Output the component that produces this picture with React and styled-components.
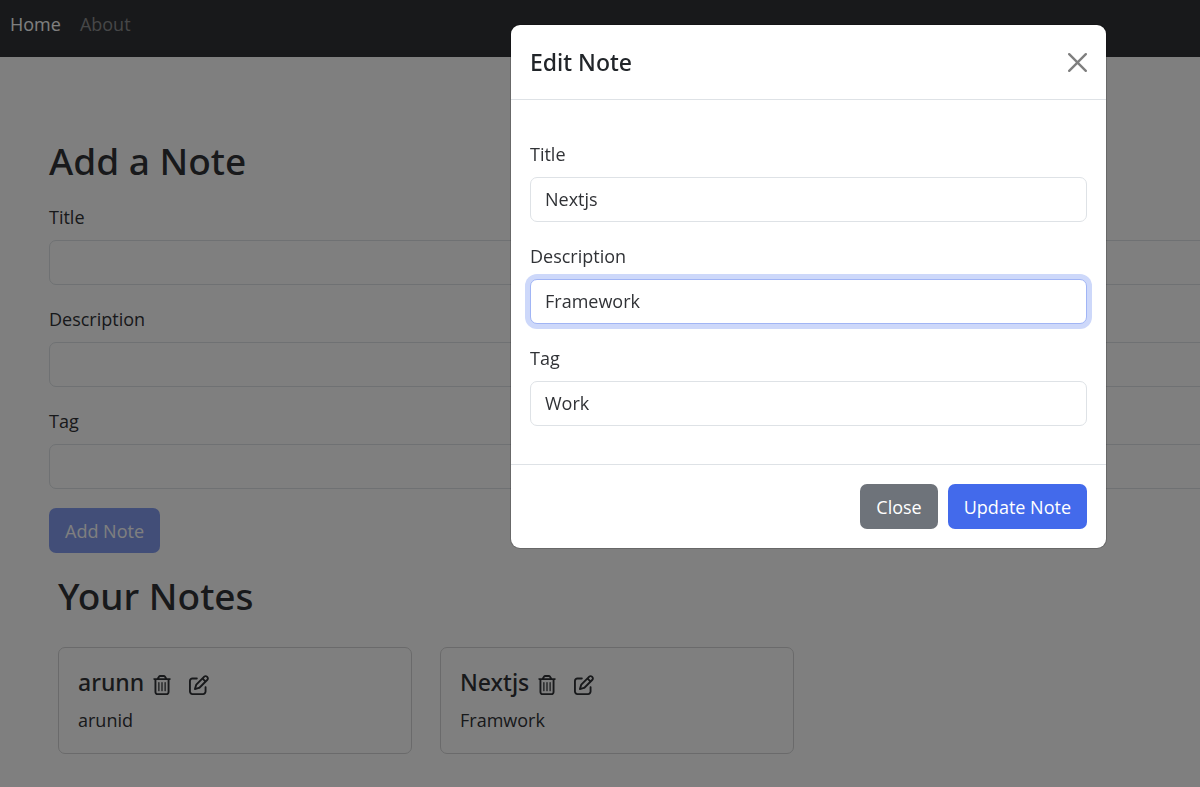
import React, { useState } from 'react'
import styled, { createGlobalStyle } from 'styled-components'
import { FaRegTrashCan, FaRegPenToSquare } from 'react-icons/fa6'

const fields = [
  { name: 'title', label: 'Title' },
  { name: 'description', label: 'Description' },
  { name: 'tag', label: 'Tag' },
]

const notes = [
  { id: 1, title: 'arunn', description: 'arunid' },
  { id: 2, title: 'Nextjs', description: 'Framwork' },
]

const Navbar = () => {
  return (
    <Nav>
      <NavItem href="#home" $active>Home</NavItem>
      <NavItem href="#about">About</NavItem>
    </Nav>
  )
}

const NoteFields = ({ prefix, values, onChange, focused }) => {
  return fields.map(({ name, label }) => (
    <Field key={name}>
      <Label htmlFor={prefix + name}>{label}</Label>
      <Input
        id={prefix + name}
        name={name}
        type="text"
        autoComplete="off"
        value={values[name]}
        onChange={onChange}
        $focused={focused === name}
      />
    </Field>
  ))
}

const NoteItem = ({ note }) => {
  return (
    <Card>
      <CardHead>
        <CardTitle>{note.title}</CardTitle>
        <IconButton type="button" aria-label="Delete note"><FaRegTrashCan /></IconButton>
        <IconButton type="button" aria-label="Edit note"><FaRegPenToSquare /></IconButton>
      </CardHead>
      <CardText>{note.description}</CardText>
    </Card>
  )
}

const EditModal = () => {
  const [note, setNote] = useState({ title: 'Nextjs', description: 'Framework', tag: 'Work' })
  const onChange = (e) => setNote({ ...note, [e.target.name]: e.target.value })

  return (
    <Backdrop>
      <Modal role="dialog" aria-modal="true" aria-labelledby="edit-heading">
        <ModalHeader>
          <ModalTitle id="edit-heading">Edit Note</ModalTitle>
          <CloseButton type="button" aria-label="Close">
            <svg viewBox="0 0 16 16" width="19" height="19" fill="currentColor">
              <path d="M.293.293a1 1 0 0 1 1.414 0L8 6.586 14.293.293a1 1 0 1 1 1.414 1.414L9.414 8l6.293 6.293a1 1 0 0 1-1.414 1.414L8 9.414l-6.293 6.293a1 1 0 0 1-1.414-1.414L6.586 8 .293 1.707a1 1 0 0 1 0-1.414" />
            </svg>
          </CloseButton>
        </ModalHeader>
        <ModalBody>
          <NoteFields prefix="edit-" values={note} onChange={onChange} focused="description" />
        </ModalBody>
        <ModalFooter>
          <Button type="button" $secondary>Close</Button>
          <Button type="button">Update Note</Button>
        </ModalFooter>
      </Modal>
    </Backdrop>
  )
}

const App = () => {
  const [note, setNote] = useState({ title: '', description: '', tag: '' })
  const onChange = (e) => setNote({ ...note, [e.target.name]: e.target.value })

  return (
    <>
      <GlobalStyle />
      <Page>
        <Navbar />
        <Main>
          <Heading>Add a Note</Heading>
          <form>
            <NoteFields prefix="add-" values={note} onChange={onChange} />
            <Button type="submit" disabled>Add Note</Button>
          </form>
          <Notes>
            <Heading>Your Notes</Heading>
            <NoteGrid>
              {notes.map((item) => <NoteItem key={item.id} note={item} />)}
            </NoteGrid>
          </Notes>
        </Main>
      </Page>
      <EditModal />
    </>
  )
}

const GlobalStyle = createGlobalStyle`
  * {
    box-sizing: border-box;
  }
  body {
    margin: 0;
    background: #fff;
    color: #303236;
    font-family: "Open Sans", "Noto Sans", sans-serif;
    font-size: 18px;
    line-height: 31px;
  }
  button, input {
    font: inherit;
  }
  h1, h2, h3, p {
    margin: 0;
  }
  h1, h2, h3 {
    font-family: "Noto Sans", "Open Sans", sans-serif;
    font-weight: 500;
  }
`

const Page = styled.div`
  min-height: 100vh;
  overflow: hidden;
`

const Nav = styled.nav`
  display: flex;
  gap: 19px;
  padding: 9px 10px 17px;
  background: #313336;
`

const NavItem = styled.a`
  color: ${({ $active }) => ($active ? '#fff' : '#8d8e90')};
  text-decoration: none;
`

/* the form runs on past the right edge of the window */
const Main = styled.main`
  margin-right: -19px;
  padding: 81px 0 34px 49px;
`

const Heading = styled.h1`
  margin-bottom: 18px;
  color: #313336;
  font-size: 37px;
  line-height: 46px;
`

const Field = styled.div`
  display: flex;
  flex-direction: column;
  gap: 7px;
  margin-bottom: 19px;
`

const Label = styled.label`
  align-self: flex-start;
`

const Input = styled.input`
  width: 100%;
  height: 45px;
  padding: 0 14px 2px;
  border: 1px solid ${({ $focused }) => ($focused ? '#a1b5f5' : '#dee2e6')};
  border-radius: 7px;
  outline: none;
  background: #fff;
  color: #303236;
  box-shadow: ${({ $focused }) => ($focused ? '0 0 0 5px #cdd8fa' : 'none')};
`

const Button = styled.button`
  height: 45px;
  padding: 2px 16px 0;
  border: none;
  border-radius: 7px;
  background: ${({ $secondary }) => ($secondary ? '#6e737a' : '#436aeb')};
  color: #fff;
  &:disabled {
    opacity: 0.65;
  }
`

const Notes = styled.section`
  padding: 20px 9px 0;
`

const NoteGrid = styled.div`
  display: grid;
  grid-template-columns: repeat(auto-fill, 354px);
  gap: 28px;
  padding-top: 10px;
`

const Card = styled.article`
  display: flex;
  flex-direction: column;
  gap: 7px;
  padding: 19px 19px 17px;
  border: 1px solid #d4d5d6;
  border-radius: 7px;
`

const CardHead = styled.div`
  display: flex;
  align-items: center;
`

const CardTitle = styled.h3`
  color: #313336;
  font-size: 23px;
`

const IconButton = styled.button`
  display: flex;
  margin: 5px 9px 0 8px;
  padding: 0;
  border: none;
  background: none;
  color: #303236;
  font-size: 20px;
`

const CardText = styled.p`
  color: #303236;
`

const Backdrop = styled.div`
  position: fixed;
  inset: 0;
  display: flex;
  align-items: flex-start;
  justify-content: flex-end;
  padding: 25px 94px 25px 25px;
  background: rgba(0, 0, 0, 0.5);
`

const Modal = styled.div`
  width: 595px;
  max-width: 100%;
  border-radius: 9px;
  background: #fff;
  box-shadow: 0 0 0 1px rgba(0, 0, 0, 0.18);
`

const ModalHeader = styled.header`
  display: flex;
  align-items: center;
  justify-content: space-between;
  padding: 19px;
  border-bottom: 1px solid #dee2e6;
`

const ModalTitle = styled.h2`
  color: #212529;
  font-size: 23px;
  line-height: 36px;
`

const CloseButton = styled.button`
  display: flex;
  padding: 0;
  border: none;
  background: none;
  color: #000;
  opacity: 0.5;
`

const ModalBody = styled.div`
  padding: 39px 19px 19px;
`

const ModalFooter = styled.footer`
  display: flex;
  justify-content: flex-end;
  gap: 10px;
  padding: 19px;
  border-top: 1px solid #dee2e6;
`

export default App
